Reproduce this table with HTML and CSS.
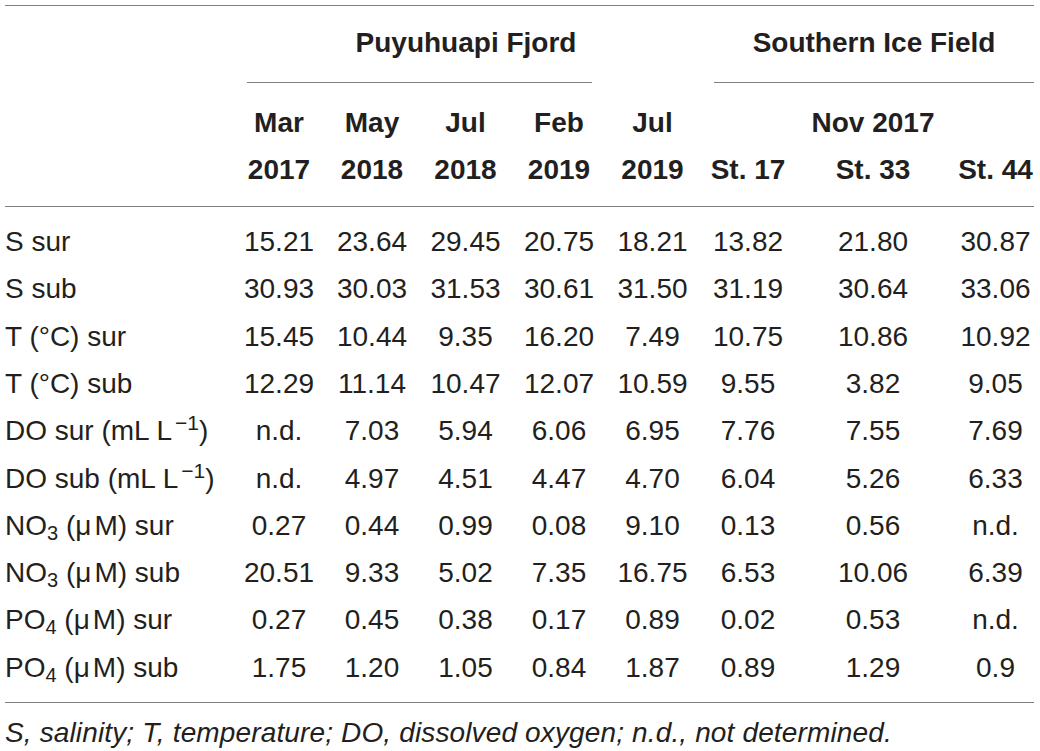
FILE: index.html
```html
<!DOCTYPE html>
<html lang="en">
<head>
<meta charset="utf-8">
<title>Table</title>
<link rel="stylesheet" href="styles.css">
</head>
<body>
<div class="page">
  <div class="table">
    <div class="row group">
      <div class="g-p">Puyuhuapi Fjord</div>
      <div class="g-s">Southern Ice Field</div>
    </div>
    <div class="row rules">
      <div class="rule rule-p"></div>
      <div class="rule rule-s"></div>
    </div>
    <div class="head">
      <div class="row hrow">
        <div class="c1">Mar</div><div class="c2">May</div><div class="c3">Jul</div><div class="c4">Feb</div><div class="c5">Jul</div><div class="nov">Nov 2017</div>
      </div>
      <div class="row hrow">
        <div class="c1">2017</div><div class="c2">2018</div><div class="c3">2018</div><div class="c4">2019</div><div class="c5">2019</div><div class="c6">St. 17</div><div class="c7">St. 33</div><div class="c8">St. 44</div>
      </div>
    </div>
    <div class="body">
      <div class="row drow"><div class="lbl">S sur</div><div>15.21</div><div>23.64</div><div>29.45</div><div>20.75</div><div>18.21</div><div>13.82</div><div>21.80</div><div class="last">30.87</div></div>
      <div class="row drow"><div class="lbl">S sub</div><div>30.93</div><div>30.03</div><div>31.53</div><div>30.61</div><div>31.50</div><div>31.19</div><div>30.64</div><div class="last">33.06</div></div>
      <div class="row drow"><div class="lbl">T (°C) sur</div><div>15.45</div><div>10.44</div><div>9.35</div><div>16.20</div><div>7.49</div><div>10.75</div><div>10.86</div><div class="last">10.92</div></div>
      <div class="row drow"><div class="lbl">T (°C) sub</div><div>12.29</div><div>11.14</div><div>10.47</div><div>12.07</div><div>10.59</div><div>9.55</div><div>3.82</div><div class="last">9.05</div></div>
      <div class="row drow"><div class="lbl">DO sur (mL L<sup>−1</sup>)</div><div>n.d.</div><div>7.03</div><div>5.94</div><div>6.06</div><div>6.95</div><div>7.76</div><div>7.55</div><div class="last">7.69</div></div>
      <div class="row drow"><div class="lbl">DO sub (mL L<sup>−1</sup>)</div><div>n.d.</div><div>4.97</div><div>4.51</div><div>4.47</div><div>4.70</div><div>6.04</div><div>5.26</div><div class="last">6.33</div></div>
      <div class="row drow"><div class="lbl">NO<sub>3</sub> (<span class="mu">μ</span>M) sur</div><div>0.27</div><div>0.44</div><div>0.99</div><div>0.08</div><div>9.10</div><div>0.13</div><div>0.56</div><div class="last">n.d.</div></div>
      <div class="row drow"><div class="lbl">NO<sub>3</sub> (<span class="mu">μ</span>M) sub</div><div>20.51</div><div>9.33</div><div>5.02</div><div>7.35</div><div>16.75</div><div>6.53</div><div>10.06</div><div class="last">6.39</div></div>
      <div class="row drow"><div class="lbl">PO<sub>4</sub> (<span class="mu">μ</span>M) sur</div><div>0.27</div><div>0.45</div><div>0.38</div><div>0.17</div><div>0.89</div><div>0.02</div><div>0.53</div><div class="last">n.d.</div></div>
      <div class="row drow"><div class="lbl">PO<sub>4</sub> (<span class="mu">μ</span>M) sub</div><div>1.75</div><div>1.20</div><div>1.05</div><div>0.84</div><div>1.87</div><div>0.89</div><div>1.29</div><div class="last">0.9</div></div>
    </div>
  </div>
  <p class="note">S, salinity; T, temperature; DO, dissolved oxygen; n.d., not determined.</p>
</div>
</body>
</html>
```

FILE: styles.css
```css
html, body {
  margin: 0;
  padding: 0;
  background: #ffffff;
}

body {
  font-family: "Liberation Sans", Arial, sans-serif;
  font-size: 28px;
  color: #231f20;
}

.page {
  padding: 5px 0 0 5px;
  width: 1029px;
}

.table {
  border-top: 1px solid #808080;
  border-bottom: 1px solid #808080;
}

.row {
  display: grid;
  grid-template-columns: 228px 92px 94px 93px 94px 93px 98px 152px 85px;
  text-align: center;
}

.group {
  padding-top: 12.5px;
  line-height: 47px;
  font-weight: bold;
}

.g-p {
  grid-column: 2 / 7;
}

.g-s {
  grid-column: 7 / 10;
  margin-left: 15px;
}

.rules {
  margin-top: 16.5px;
  height: 1px;
}

.rule {
  border-top: 1px solid #808080;
}

.rule-p {
  grid-column: 2 / 6;
  margin: 0 14px;
}

.rule-s {
  grid-column: 7 / 10;
  margin-left: 15px;
}

.head {
  padding-top: 17px;
  padding-bottom: 12.5px;
  border-bottom: 1px solid #808080;
  font-weight: bold;
}

.hrow {
  line-height: 46.7px;
}

.c1 { grid-column: 2; }
.c2 { grid-column: 3; }
.c3 { grid-column: 4; }
.c4 { grid-column: 5; }
.c5 { grid-column: 6; }
.c6 { grid-column: 7; }
.c7 { grid-column: 8; }
.c8 { grid-column: 9; padding-left: 8px; }
.nov { grid-column: 8; }

.body {
  padding-top: 11.2px;
  padding-bottom: 11.3px;
}

.drow {
  line-height: 47.3px;
}

.lbl {
  text-align: left;
  white-space: nowrap;
}

.last {
  padding-left: 8px;
}

sup {
  font-size: 21px;
  line-height: 0;
  vertical-align: 10px;
  margin-left: 3px;
}

sub {
  font-size: 20px;
  line-height: 0;
  vertical-align: -5px;
}

.mu {
  margin-right: 3px;
}

.note {
  margin: 13px 0 0 0;
  font-style: italic;
  line-height: 34px;
  letter-spacing: 0.14px;
  white-space: nowrap;
}
```
